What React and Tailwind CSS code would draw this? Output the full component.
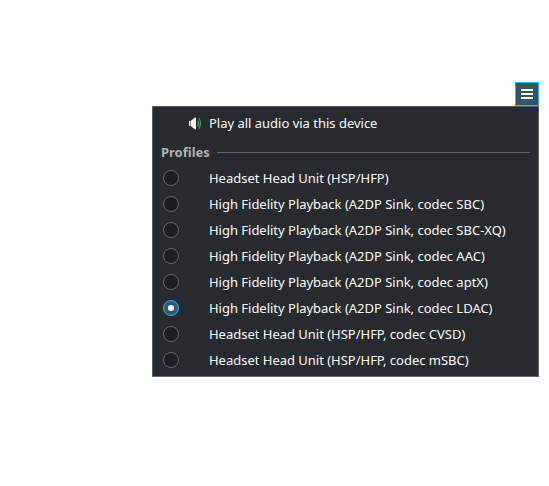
const profiles = [
  'Headset Head Unit (HSP/HFP)',
  'High Fidelity Playback (A2DP Sink, codec SBC)',
  'High Fidelity Playback (A2DP Sink, codec SBC-XQ)',
  'High Fidelity Playback (A2DP Sink, codec AAC)',
  'High Fidelity Playback (A2DP Sink, codec aptX)',
  'High Fidelity Playback (A2DP Sink, codec LDAC)',
  'Headset Head Unit (HSP/HFP, codec CVSD)',
  'Headset Head Unit (HSP/HFP, codec mSBC)',
];
const selected = 5;

function SpeakerIcon() {
  return (
    <svg width="16" height="16" viewBox="0 0 16 16" fill="none" className="mb-px">
      <path d="M2 5h1v5H2zM3.6 5 8 1.4H9v12.2H8L3.6 10z" fill="#fcfcfc" />
      <path d="M10.5 4.5q1.8 3 0 6" stroke="#27ae60" strokeWidth="1.2" />
      <path d="M11.8 2.2q3.4 5.3 0 10.6" stroke="#27ae60" strokeWidth="1.2" />
    </svg>
  );
}

function Radio({ checked }) {
  return (
    <span
      className={
        checked
          ? 'flex size-4 items-center justify-center rounded-full border border-[#3daee9] bg-[#2e5c76]'
          : 'size-4 rounded-full border border-[#64686b] bg-[#1b1e20]'
      }
    >
      {checked && <span className="size-1.5 rounded-full bg-[#fcfcfc]" />}
    </span>
  );
}

export default function App() {
  return (
    <div className="flex h-[486px] w-[549px] flex-col items-end overflow-hidden bg-white pt-[82px] pr-2.5 font-['Noto_Sans',sans-serif] text-[13px] text-[#fcfcfc]">
      <button className="flex h-6 w-6 flex-col items-center justify-center gap-[2px] border border-[#3daee9] bg-[#2e556b]">
        <span className="h-[2px] w-3 bg-[#fcfcfc]" />
        <span className="h-[2px] w-3 bg-[#fcfcfc]" />
        <span className="h-[2px] w-3 bg-[#fcfcfc]" />
      </button>
      <div className="h-[271px] w-[387px] border border-[#5c6063] bg-[#272a2e] pt-1 whitespace-nowrap">
        <div className="flex h-[26px] items-center pl-[34px]">
          <SpeakerIcon />
          <span className="ml-1.5 tracking-[-0.01px]">Play all audio via this device</span>
        </div>
        <div className="flex h-7 items-center pt-0.5 pr-2 pl-2">
          <span className="pt-0.5 font-bold text-[#b0b2b3]">Profiles</span>
          <span className="ml-[7px] h-px flex-1 bg-[#616467]" />
        </div>
        {profiles.map((name, i) => (
          <div key={name} className="flex h-[26px] items-center pl-2.5">
            <Radio checked={i === selected} />
            <span className="ml-[30px] pt-0.5 tracking-[-0.015px]">{name}</span>
          </div>
        ))}
      </div>
    </div>
  );
}
